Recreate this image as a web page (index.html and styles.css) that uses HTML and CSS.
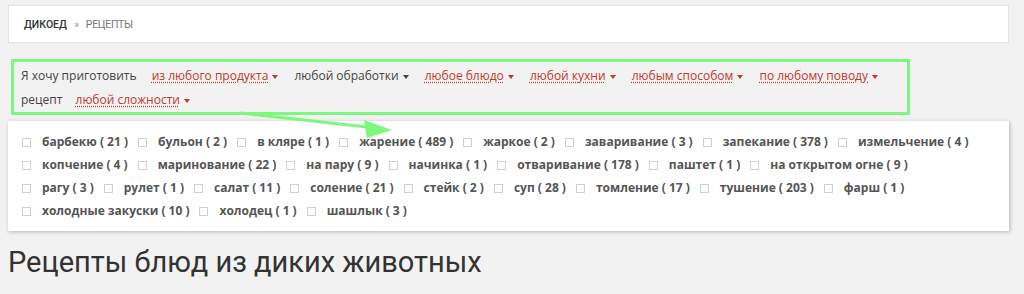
FILE: index.html
```html
<!DOCTYPE html>
<html lang="ru">
<head>
    <meta charset="UTF-8">
    <title>Рецепты блюд из диких животных</title>
    <link rel="stylesheet" href="styles.css">
</head>
<body>
    <div class="breadcrumbs">
        <a href="#" class="crumb-home">Дикоед</a>
        <span class="crumb-sep">»</span>
        <span class="crumb-current">Рецепты</span>
    </div>

    <div class="filter-wrap">
        <div class="filter">
            <span class="filter-text first">Я хочу приготовить</span>
            <a href="#" class="filter-link">из любого продукта</a>
            <span class="filter-plain">любой обработки</span>
            <a href="#" class="filter-link">любое блюдо</a>
            <a href="#" class="filter-link">любой кухни</a>
            <a href="#" class="filter-link">любым способом</a>
            <a href="#" class="filter-link">по любому поводу</a>
            <br>
            <span class="filter-text">рецепт</span>
            <a href="#" class="filter-link">любой сложности</a>
        </div>

        <!-- стрелка-пометка поверх выпадающего списка -->
        <svg class="arrow" width="180" height="30" viewBox="0 0 180 30">
            <line x1="4" y1="2" x2="140" y2="17" stroke="#7ef77e" stroke-width="3"/>
            <polygon points="156,19 128,9 131,27" fill="#7ef77e"/>
        </svg>

        <div class="dropdown">
            <label class="opt"><span class="box"></span>барбекю ( 21 )</label>
            <label class="opt"><span class="box"></span>бульон ( 2 )</label>
            <label class="opt"><span class="box"></span>в кляре ( 1 )</label>
            <label class="opt"><span class="box"></span>жарение ( 489 )</label>
            <label class="opt"><span class="box"></span>жаркое ( 2 )</label>
            <label class="opt"><span class="box"></span>заваривание ( 3 )</label>
            <label class="opt"><span class="box"></span>запекание ( 378 )</label>
            <label class="opt"><span class="box"></span>измельчение ( 4 )</label>
            <label class="opt"><span class="box"></span>копчение ( 4 )</label>
            <label class="opt"><span class="box"></span>маринование ( 22 )</label>
            <label class="opt"><span class="box"></span>на пару ( 9 )</label>
            <label class="opt"><span class="box"></span>начинка ( 1 )</label>
            <label class="opt"><span class="box"></span>отваривание ( 178 )</label>
            <label class="opt"><span class="box"></span>паштет ( 1 )</label>
            <label class="opt"><span class="box"></span>на открытом огне ( 9 )</label>
            <label class="opt"><span class="box"></span>рагу ( 3 )</label>
            <label class="opt"><span class="box"></span>рулет ( 1 )</label>
            <label class="opt"><span class="box"></span>салат ( 11 )</label>
            <label class="opt"><span class="box"></span>соление ( 21 )</label>
            <label class="opt"><span class="box"></span>стейк ( 2 )</label>
            <label class="opt"><span class="box"></span>суп ( 28 )</label>
            <label class="opt"><span class="box"></span>томление ( 17 )</label>
            <label class="opt"><span class="box"></span>тушение ( 203 )</label>
            <label class="opt"><span class="box"></span>фарш ( 1 )</label>
            <label class="opt"><span class="box"></span>холодные закуски ( 10 )</label>
            <label class="opt"><span class="box"></span>холодец ( 1 )</label>
            <label class="opt"><span class="box"></span>шашлык ( 3 )</label>
        </div>
    </div>

    <h1 class="page-title">Рецепты блюд из диких животных</h1>
</body>
</html>
```

FILE: styles.css
```css
body {
    margin: 0;
    padding: 5px 15px 0 8px;
    background: #f2f2f2;
    font-family: "Open Sans", Arial, sans-serif;
    color: #444;
}
a {
    text-decoration: none;
}
.breadcrumbs {
    background: #fff;
    border: 1px solid #e3e3e3;
    height: 36px;
    padding: 0 15px;
    display: flex;
    align-items: center;
    font-family: Roboto, Arial, sans-serif;
    font-size: 10.5px;
    text-transform: uppercase;
}
.crumb-home {
    color: #333;
    font-weight: 500;
}
.crumb-sep {
    color: #999;
    margin: 0 7px;
}
.crumb-current {
    color: #777;
    letter-spacing: -0.3px;
}
.filter-wrap {
    position: relative;
    margin-top: 16px;
}
.filter {
    box-sizing: border-box;
    width: 899px;
    margin-left: 3px;
    border: 3px solid #7ef77e;
    padding: 2px 7px 0;
    height: 56px;
    font-size: 12px;
    line-height: 24px;
}
.filter-text {
    margin-right: 10px;
}
.filter-text.first {
    margin-right: 12px;
}
.filter-link,
.filter-plain {
    margin-right: 13px;
    white-space: nowrap;
}
.filter-link {
    color: #c0392b;
    text-decoration: underline dotted #c0392b;
    text-underline-offset: 2px;
}
.filter-link::after,
.filter-plain::after {
    content: "";
    display: inline-block;
    margin-left: 4px;
    vertical-align: middle;
    border-left: 3.5px solid transparent;
    border-right: 3.5px solid transparent;
    border-top: 4px solid #c0392b;
}
.filter-plain {
    color: #444;
}
.filter-plain::after {
    border-top-color: #444;
}
.arrow {
    position: absolute;
    left: 228px;
    top: 52px;
    z-index: 2;
}
.dropdown {
    background: #fff;
    margin-top: 6px;
    padding: 11px 30px 10px 14px;
    box-shadow: 1px 1px 4px rgba(0, 0, 0, 0.25);
    display: flex;
    flex-wrap: wrap;
    row-gap: 3px;
    font-size: 12px;
    font-weight: 700;
    color: #555;
    line-height: 20px;
}
.opt {
    display: flex;
    align-items: center;
    margin-right: 10px;
}
.box {
    box-sizing: border-box;
    width: 9px;
    height: 9px;
    border: 1px solid #d0d0d0;
    margin-right: 11px;
}
.page-title {
    font-family: Roboto, Arial, sans-serif;
    font-weight: 400;
    font-size: 29px;
    color: #333;
    margin: 14px 0 0;
}
```
